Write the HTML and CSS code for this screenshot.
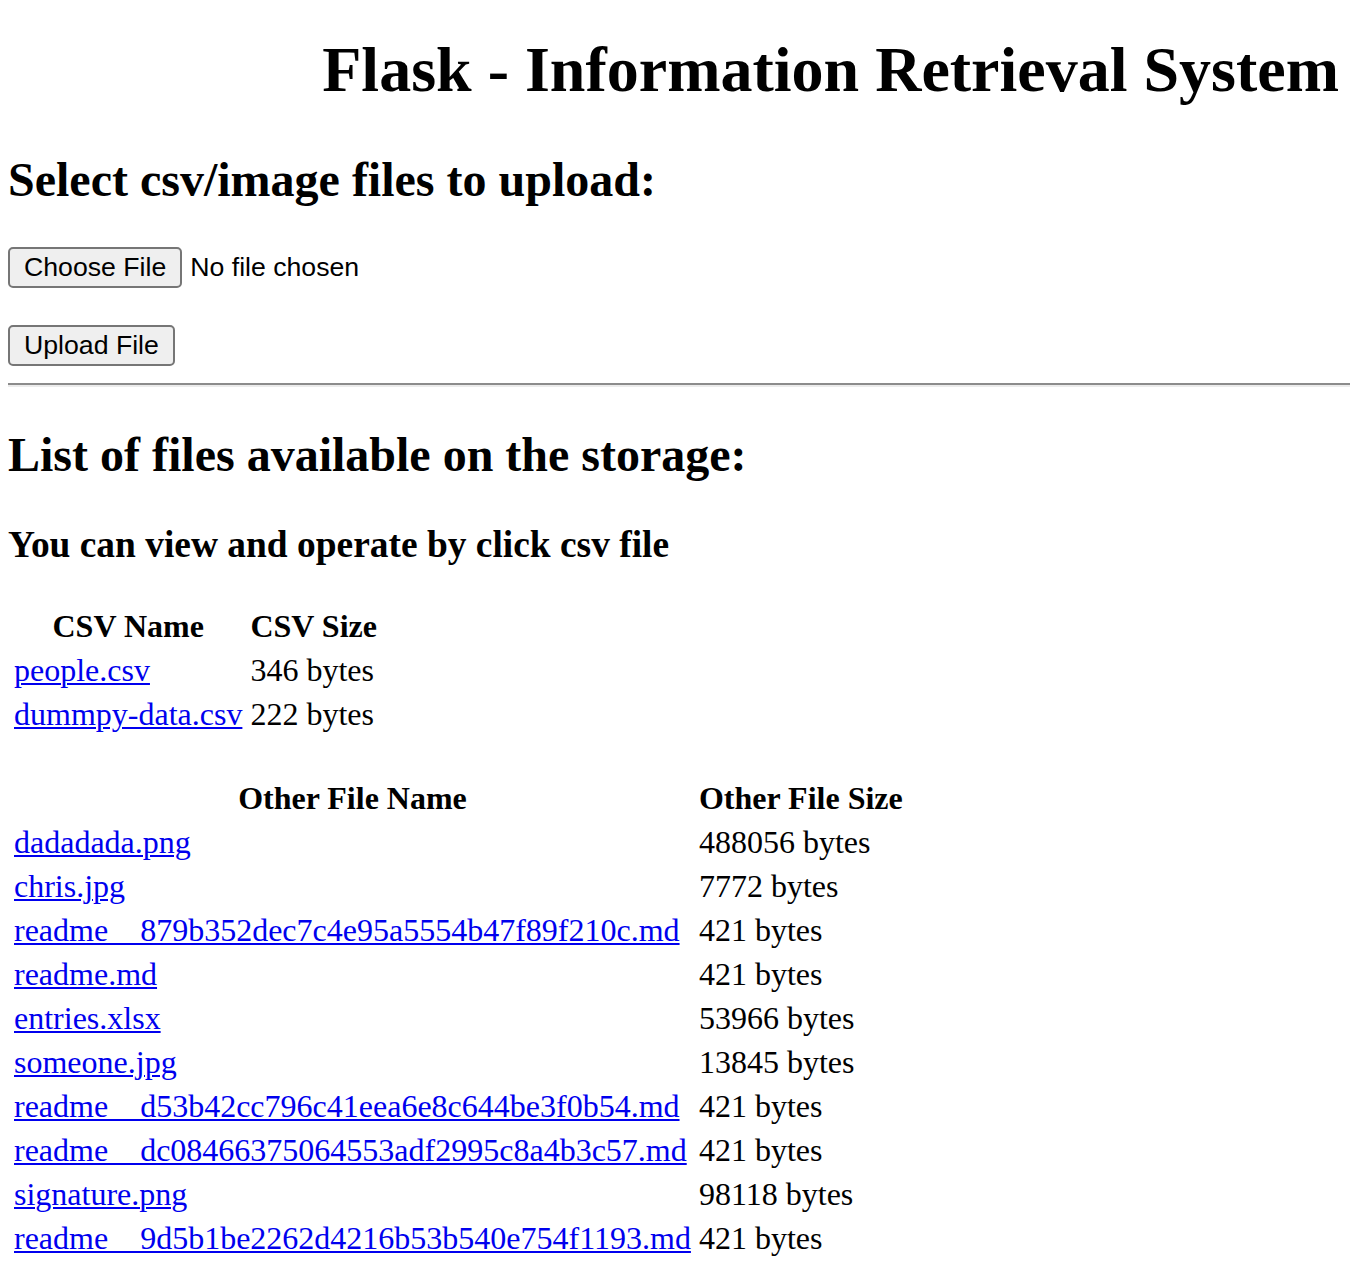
FILE: index.html
```html
<!DOCTYPE html>
<html lang="en">
<head>
<meta charset="utf-8">
<title>Flask - Information Retrieval System</title>
<link rel="stylesheet" href="styles.css">
</head>
<body class="page">
  <h1 class="title">Flask - Information Retrieval System</h1>
  <h2 class="section-heading upload-heading">Select csv/image files to upload:</h2>
  <form class="upload-form">
    <div class="file-row">
      <button type="button" class="btn">Choose File</button>
      <span class="file-status">No file chosen</span>
    </div>
    <div class="submit-row">
      <button type="button" class="btn">Upload File</button>
    </div>
  </form>
  <hr class="divider">
  <h2 class="section-heading list-heading">List of files available on the storage:</h2>
  <h3 class="sub-heading">You can view and operate by click csv file</h3>
  <table class="file-table csv-table">
    <tr><th>CSV Name</th><th>CSV Size</th></tr>
    <tr><td><a href="#">people.csv</a></td><td>346 bytes</td></tr>
    <tr><td><a href="#">dummpy-data.csv</a></td><td>222 bytes</td></tr>
  </table>
  <table class="file-table other-table">
    <tr><th>Other File Name</th><th>Other File Size</th></tr>
    <tr><td><a href="#">dadadada.png</a></td><td>488056 bytes</td></tr>
    <tr><td><a href="#">chris.jpg</a></td><td>7772 bytes</td></tr>
    <tr><td><a href="#">readme__879b352dec7c4e95a5554b47f89f210c.md</a></td><td>421 bytes</td></tr>
    <tr><td><a href="#">readme.md</a></td><td>421 bytes</td></tr>
    <tr><td><a href="#">entries.xlsx</a></td><td>53966 bytes</td></tr>
    <tr><td><a href="#">someone.jpg</a></td><td>13845 bytes</td></tr>
    <tr><td><a href="#">readme__d53b42cc796c41eea6e8c644be3f0b54.md</a></td><td>421 bytes</td></tr>
    <tr><td><a href="#">readme__dc08466375064553adf2995c8a4b3c57.md</a></td><td>421 bytes</td></tr>
    <tr><td><a href="#">signature.png</a></td><td>98118 bytes</td></tr>
    <tr><td><a href="#">readme__9d5b1be2262d4216b53b540e754f1193.md</a></td><td>421 bytes</td></tr>
  </table>
</body>
</html>
```

FILE: styles.css
```css
html {
  background: #ffffff;
}

.page {
  margin: 0 8px;
  font-family: "Liberation Serif", "Times New Roman", serif;
  font-size: 32px;
  color: #000000;
}

.title {
  margin: 33px 0 0;
  padding-right: 11px;
  font-size: 64px;
  line-height: 74px;
  font-weight: bold;
  text-align: right;
}

.section-heading {
  margin: 0;
  font-size: 48px;
  line-height: 55px;
  font-weight: bold;
}

.upload-heading {
  margin-top: 45px;
}

.list-heading {
  margin-top: 40px;
}

.sub-heading {
  margin: 41px 0 0;
  font-size: 37.44px;
  line-height: 43px;
  font-weight: bold;
}

.upload-form {
  margin: 40px 0 0;
}

.file-row {
  display: flex;
  align-items: center;
  gap: 8px;
}

.submit-row {
  display: flex;
  margin-top: 37px;
}

.btn {
  box-sizing: border-box;
  height: 41px;
  margin: 0;
  padding: 0 14px;
  font-family: "Liberation Sans", Arial, sans-serif;
  font-size: 26.67px;
  line-height: 1;
  color: #000000;
  background: #efefef;
  border: 2px solid #767676;
  border-radius: 5px;
}

.file-status {
  font-family: "Liberation Sans", Arial, sans-serif;
  font-size: 26.67px;
  line-height: 41px;
}

.divider {
  box-sizing: border-box;
  width: calc(100% + 8px);
  height: 4px;
  margin: 17px 0 0;
  border: none;
  border-top: 2px solid #8c8c8c;
  border-bottom: 2px solid #ececec;
}

.file-table {
  border-collapse: separate;
  border-spacing: 4px;
  font-size: 32px;
  line-height: 36px;
}

.file-table th,
.file-table td {
  padding: 2px;
  white-space: nowrap;
}

.file-table th {
  font-weight: bold;
  text-align: center;
}

.file-table td {
  text-align: left;
}

.file-table a {
  color: #0000ee;
  text-decoration: underline;
  text-decoration-thickness: 2px;
  text-underline-offset: 2px;
}

.csv-table {
  margin-top: 36px;
}

.other-table {
  margin-top: 36px;
}
```
